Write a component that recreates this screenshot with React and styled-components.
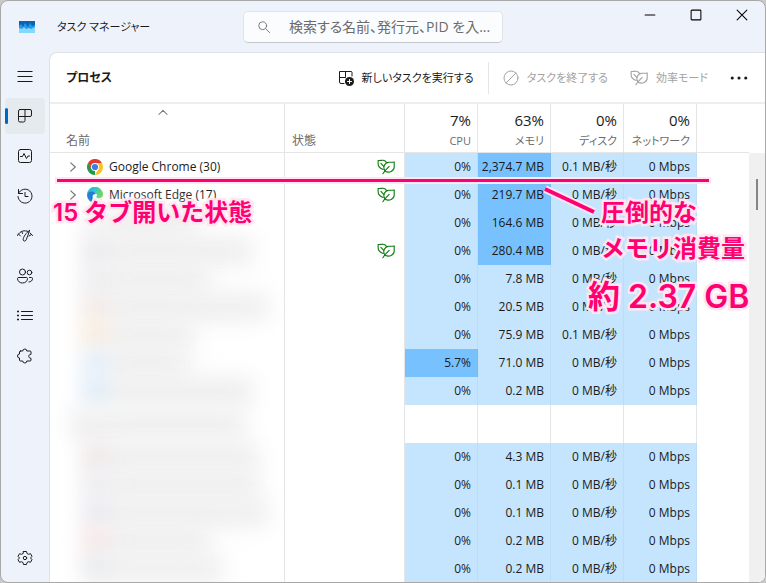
import React from 'react'
import styled, { createGlobalStyle } from 'styled-components'

const colors = {
  chrome: '#eef3fb',
  line: '#e5e5e5',
  text: '#1b1b1b',
  muted: '#6b6b6b',
  disabled: '#a3a3a3',
  accent: '#0067c0',
  heat: '#c5e5ff',
  heatStrong: '#77c1ff',
  leaf: '#107c10',
  marker: '#ff0073',
  markerEdge: '#ffe6f1',
}

const GlobalStyle = createGlobalStyle`
  * {
    box-sizing: border-box;
  }
  body {
    margin: 0;
    background: #c9c9c9;
    color: ${colors.text};
    font-family: 'Open Sans', 'Noto Sans CJK JP', sans-serif;
    font-size: 12px;
    line-height: 16px;
    font-feature-settings: 'palt';
  }
  button,
  input {
    font: inherit;
    font-feature-settings: inherit;
    color: inherit;
  }
`

const Window = styled.div`
  position: relative;
  display: flex;
  flex-direction: column;
  height: 100vh;
  overflow: hidden;
  border: 1px solid #a8a8a8;
  border-radius: 8px;
  background: ${colors.chrome};
`
const TitleBar = styled.header`
  display: grid;
  grid-template-columns: 12fr 260px 13fr;
  flex: none;
  height: 51px;
`
const TitleGroup = styled.div`
  display: flex;
  align-items: center;
  gap: 22px;
  padding-left: 18px;
`
const AppName = styled.h1`
  margin: 0;
  font-size: 11px;
  font-weight: 400;
`
const SearchBox = styled.label`
  display: flex;
  align-items: center;
  align-self: center;
  gap: 18px;
  height: 32px;
  padding: 0 8px 0 13px;
  border: 1px solid #dfe3ea;
  border-bottom-color: #c4c8ce;
  border-radius: 5px;
  background: #fbfcfe;
  color: ${colors.muted};
`
const SearchInput = styled.input`
  flex: 1;
  min-width: 0;
  padding: 0;
  border: 0;
  outline: 0;
  background: none;
  font-size: 14px;
  line-height: 20px;
  &::placeholder {
    color: ${colors.muted};
    opacity: 1;
  }
`
const WindowControls = styled.div`
  display: flex;
  justify-content: flex-end;
  align-items: flex-start;
`
const ControlButton = styled.button`
  display: grid;
  place-items: center;
  width: 46px;
  height: 28px;
  padding: 0;
  border: 0;
  background: none;
`
const Body = styled.div`
  display: flex;
  flex: 1;
  min-height: 0;
`
const Sidebar = styled.nav`
  display: flex;
  flex-direction: column;
  flex: none;
  gap: 4px;
  width: 48px;
  padding: 6px 4px;
`
const NavButton = styled.button`
  display: flex;
  align-items: center;
  gap: 9px;
  width: 40px;
  height: 36px;
  padding: 0;
  border: 0;
  border-radius: 4px;
  background: ${(p) => (p.$active ? '#e5eaee' : 'none')};
  margin-top: ${(p) => (p.$last ? 'auto' : '0')};
  &::before {
    content: '';
    width: 3px;
    height: 16px;
    border-radius: 2px;
    background: ${(p) => (p.$active ? colors.accent : 'transparent')};
  }
`
const Main = styled.main`
  flex: 1;
  min-width: 0;
  overflow: hidden;
  border: 1px solid #dde2ea;
  border-width: 1px 0 0 1px;
  border-top-left-radius: 8px;
  background: #fff;
`
const Toolbar = styled.div`
  display: flex;
  align-items: center;
  height: 51px;
  padding: 0 17px 0 16px;
  border-bottom: 2px solid #eeeeee;
`
const PageTitle = styled.h2`
  flex: 1;
  margin: 0;
  font-size: 12px;
  line-height: 20px;
  font-weight: 700;
`
const ToolButton = styled.button`
  display: flex;
  align-items: center;
  gap: 8px;
  padding: 0;
  border: 0;
  background: none;
  font-size: 11px;
  white-space: nowrap;
  margin-left: ${(p) => (p.$gap ? '22px' : '0')};
  &:disabled {
    color: ${colors.disabled};
  }
`
const Divider = styled.span`
  width: 1px;
  height: 32px;
  margin: 0 14px;
  background: ${colors.line};
`
const TableArea = styled.div`
  display: flex;
`
const Table = styled.table`
  flex: 1;
  width: 100%;
  table-layout: fixed;
  border-collapse: separate;
  border-spacing: 0;
`
const Col = styled.col`
  width: ${(p) => p.$width};
`
const HeadCell = styled.th`
  height: 49px;
  padding: 0 6px 3px 7px;
  border-right: ${(p) => (p.$end ? '0' : `1px solid ${colors.line}`)};
  border-bottom: 1px solid ${colors.line};
  color: ${colors.muted};
  font-size: ${(p) => (p.$number ? '11px' : '12px')};
  font-weight: 400;
  text-align: ${(p) => (p.$number ? 'right' : 'left')};
  vertical-align: bottom;
  white-space: nowrap;
`
const NameHead = styled(HeadCell)`
  padding-left: 16px;
`
const SortMark = styled.span`
  display: block;
  height: 26px;
  padding-right: 18px;
  text-align: center;
`
const Total = styled.strong`
  display: block;
  color: ${colors.text};
  font-size: 15px;
  line-height: 26px;
  font-weight: 400;
`
const Cell = styled.td`
  height: ${(p) => (p.$tall ? '38px' : '28px')};
  padding: 0;
  border-right: 1px solid ${colors.line};
`
const EndCell = styled.td`
  padding: 0;
`
const StatusCell = styled(Cell)`
  padding-right: 9px;
  text-align: right;
  svg {
    display: inline-block;
    vertical-align: middle;
  }
`
const ValueCell = styled(Cell)`
  padding-right: 6px;
  border-right-color: ${(p) => (p.$strong ? '#77b9f0' : '#bddcf5')};
  background: ${(p) => (p.$strong ? colors.heatStrong : colors.heat)};
  text-align: right;
  white-space: nowrap;
`
const ProcessName = styled.div`
  display: flex;
  align-items: center;
  gap: 6px;
  padding-left: 17px;
`
const ExpandButton = styled.button`
  display: grid;
  place-items: center;
  width: 12px;
  height: 16px;
  margin-right: 2px;
  padding: 0;
  border: 0;
  background: none;
`
const HiddenName = styled.div`
  display: flex;
  align-items: center;
  gap: 2px;
  padding-left: ${(p) => (p.$group ? '20px' : '34px')};
  filter: blur(11px);
`
const HiddenIcon = styled.span`
  width: 22px;
  height: 28px;
  background: ${(p) => p.$tint};
`
const HiddenText = styled.span`
  width: ${(p) => p.$width}px;
  height: 28px;
  background: #eeeeee;
`
const ScrollTrack = styled.div`
  flex: none;
  width: 16px;
  margin-top: 49px;
  padding: 26px 7px 0;
  background: #f0f0f0;
`
const ScrollThumb = styled.div`
  width: 2px;
  height: 31px;
  background: #858585;
`

const MarkerLine = styled.div`
  position: absolute;
  top: 178px;
  left: 56px;
  width: 652px;
  height: 3px;
  background: ${colors.marker};
  box-shadow: 0 0 0 2px ${colors.markerEdge};
`
const MarkerPointer = styled.svg`
  position: absolute;
  top: 182px;
  left: 538px;
`
const MarkerText = styled.p`
  position: absolute;
  top: ${(p) => p.$top}px;
  left: ${(p) => p.$left}px;
  margin: 0;
  color: ${colors.marker};
  font-family: Inter, 'Noto Sans CJK JP', sans-serif;
  font-feature-settings: normal;
  font-size: ${(p) => (p.$big ? '32px' : '24px')};
  line-height: 36px;
  font-weight: 600;
  white-space: nowrap;
  -webkit-text-stroke: 5px ${colors.markerEdge};
  paint-order: stroke fill;
`

const Icon = ({ size = 16, color = 'currentColor', children }) => (
  <svg
    width={size}
    height={size}
    viewBox="0 0 16 16"
    fill="none"
    stroke={color}
    strokeLinecap="round"
    strokeLinejoin="round"
    aria-hidden="true"
  >
    {children}
  </svg>
)

const AppLogo = () => (
  <svg width="16" height="12" viewBox="0 0 16 12" aria-hidden="true">
    <path d="M0 0h16v12H0z" fill="#0a63b5" />
    <path d="M0 5l2-2 2 3 2-4 3 4 2-4 2 3 3-1v8H0z" fill="#2499e8" />
    <path d="M0 7l3 1 2-2 2 2 3-1 2 1 4-2v6H0z" fill="#84d8ff" />
  </svg>
)

const LeafIcon = ({ color }) => (
  <Icon size={18} color={color}>
    <path d="M5.500 10.200C2.800 9.200 1 7.500 1 5V2.200c2 .3 3-.4 4.500-.2 1.400.2 2.500 1 3 2" />
    <path d="M7 11.500C4.800 8.500 6.500 4.200 10.500 3.800c1.700-.2 3 .2 4.800-.3V8c0 3.500-4.500 6-8.300 3.500z" />
    <path d="M3.500 4.800l2.500 2.700M5.200 14l1.800-2.500L10.800 7.500" />
  </Icon>
)

const ChromeIcon = () => (
  <svg width="16" height="16" viewBox="0 0 16 16" aria-hidden="true">
    <path d="M8 8L8 16A8 8 0 0 1 1.070 4L4.540 10z" fill="#229a49" />
    <path d="M8 4h6.930A8 8 0 0 1 8 16l3.460-6z" fill="#fcc31e" />
    <path d="M8 4H1.070L4.540 10z" fill="#229a49" />
    <path d="M1.070 4A8 8 0 0 1 14.930 4H8a4 4 0 0 0-3.460 6z" fill="#e33b2e" />
    <circle cx="8" cy="8" r="4" fill="#fff" />
    <circle cx="8" cy="8" r="3.100" fill="#3b7ded" />
  </svg>
)

const EdgeIcon = () => (
  <svg width="16" height="16" viewBox="0 0 16 16" aria-hidden="true">
    <defs>
      <linearGradient id="edge-wave" x1="0" y1="0" x2="1" y2="0.4">
        <stop offset="0" stopColor="#2ba8e0" />
        <stop offset="0.5" stopColor="#2fc3d4" />
        <stop offset="1" stopColor="#62d84e" />
      </linearGradient>
    </defs>
    <path d="M0 8a8 8 0 0 1 16-.5c.1 2.500-2 3.800-4 3.800-2.300 0-3.200-1-2.500-1.800C11 7 8 4.500 5 5 2.500 5.400.5 6.500 0 8z" fill="url(#edge-wave)" />
    <path d="M0 8c.5-2.500 2.500-3.500 5-3.500 2 0 3.500 1 4 2.500-3-.5-4 2-3 4s3.500 3.500 8.500 1.500C13 15 10.500 16 8 16a8 8 0 0 1-8-8z" fill="#1479d3" />
    <path d="M5.500 7C4 8.500 4 11.500 6 13.500c1.500 1.500 5 1.500 8.500-1C13 15 10.500 16 8 16c-4-.5-6-5.500-2.500-9z" fill="#0d4f9e" />
  </svg>
)

const NavIcons = {
  menu: <path d="M.5 3.500h15M.5 8.500h15M.5 13.500h15" strokeLinecap="butt" />,
  processes: <path d="M3 1.500h10a1.500 1.500 0 0 1 1.500 1.500v4A1.500 1.500 0 0 1 13 8.500H1.500V3A1.500 1.500 0 0 1 3 1.500zM1.500 8.500v4A1.500 1.500 0 0 0 3 14h3.500A1.500 1.500 0 0 0 8 12.500v-11" />,
  performance: (
    <>
      <rect x="1.500" y="1.500" width="13" height="13" rx="2" />
      <path d="M3.500 8.500h2l1.500-3 2.500 5 1.500-2.500h1.500" />
    </>
  ),
  history: <path d="M1.500 1.500v4h4M1.500 5.500A7 7 0 1 1 1 8.500M8 4.500v4h3" />,
  startup: (
    <>
      <path d="M.5 7.500C3 2.500 8 2 11 3.500M13 5c1 .8 2 1.500 2.500 2.500M1.500 6l2 2M5 4l.5 1.500M12 8l2.500-1.500" />
      <path d="M12.500 2.500C9.500 4.500 6 9 6.200 11.800c.3 1.700 2.300 1.700 3 0C10 9.500 11.500 6 12.500 2.500z" />
    </>
  ),
  users: (
    <>
      <circle cx="5.500" cy="4" r="3" />
      <circle cx="12.500" cy="4.500" r="2.300" />
      <path d="M2 9.500h7.500c.6 0 1 .4 1 1 0 2.500-2 4.500-5 4.500S.5 13 .5 10.500c0-.6.4-1 1.500-1zM12.500 9.500h2c.6 0 1 .4 1 1 0 2-1.500 3.500-3.500 3.500" />
    </>
  ),
  details: (
    <>
      <path d="M4.500 3.500h11M4.500 7.500h11M4.500 11.500h11" />
      <path d="M0 3.500h2M0 7.500h2M0 11.500h2" strokeWidth="1.500" strokeLinecap="butt" />
    </>
  ),
  services: <path d="M3.500 3h2.300a2 2 0 0 1 4 0H13a1 1 0 0 1 1 1v2.300c-3 0-3 4 0 4V12a1 1 0 0 1-1 1H9.800a2 2 0 0 1-4 0H3.500a1 1 0 0 1-1-1v-2a2 2 0 0 1 0-4V4a1 1 0 0 1 1-1z" />,
  settings: (
    <>
      <path d="M6.500 1.500h3l.5 2 1.500.8 2-.6 1.500 2.600L13.500 8l1.500 1.700-1.500 2.600-2-.6-1.500.8-.5 2h-3l-.5-2-1.500-.8-2 .6L1 9.700 2.500 8 1 6.300l1.500-2.600 2 .6L6 3.500z" />
      <circle cx="8" cy="8" r="1.700" />
    </>
  ),
}

const navItems = [
  { id: 'menu', label: 'メニュー' },
  { id: 'processes', label: 'プロセス', active: true },
  { id: 'performance', label: 'パフォーマンス' },
  { id: 'history', label: 'アプリの履歴' },
  { id: 'startup', label: 'スタートアップ アプリ' },
  { id: 'users', label: 'ユーザー' },
  { id: 'details', label: '詳細' },
  { id: 'services', label: 'サービス' },
  { id: 'settings', label: '設定', last: true },
]

const totals = [
  { label: 'CPU', value: '7%' },
  { label: 'メモリ', value: '63%' },
  { label: 'ディスク', value: '0%' },
  { label: 'ネットワーク', value: '0%' },
]

const rows = [
  { name: 'Google Chrome (30)', icon: <ChromeIcon />, leaf: true, memory: '2,374.7 MB', disk: '0.1 MB/秒', hot: 'memory' },
  { name: 'Microsoft Edge (17)', icon: <EdgeIcon />, leaf: true, memory: '219.7 MB', hot: 'memory' },
  { tint: '#f3f3f5', width: 90, memory: '164.6 MB', hot: 'memory' },
  { tint: '#e6e6ea', width: 145, leaf: true, memory: '280.4 MB', hot: 'memory' },
  { tint: '#e9e9ed', width: 100, memory: '7.8 MB' },
  { tint: '#efe5e2', width: 160, memory: '20.5 MB' },
  { tint: '#f8e8d4', width: 85, memory: '75.9 MB', disk: '0.1 MB/秒' },
  { tint: '#deebfa', width: 80, cpu: '5.7%', memory: '71.0 MB', hot: 'cpu' },
  { tint: '#d8e8f6', width: 145, memory: '0.2 MB' },
  { group: true, width: 175 },
  { tint: '#eae2e1', width: 150, memory: '4.3 MB' },
  { tint: '#e9e9ee', width: 150, memory: '0.1 MB' },
  { tint: '#e5e6ec', width: 160, memory: '0.1 MB' },
  { tint: '#f6e2e1', width: 100, memory: '0.2 MB' },
  { tint: '#e3e6ea', width: 115, memory: '0.2 MB' },
]

const NameContent = ({ row }) =>
  row.name ? (
    <ProcessName>
      <ExpandButton aria-label={`${row.name} を展開`}>
        <Icon size={12} color="#777">
          <path d="M5 2.500L11 8l-6 5.500" strokeWidth="1.600" />
        </Icon>
      </ExpandButton>
      {row.icon}
      {row.name}
    </ProcessName>
  ) : (
    <HiddenName $group={row.group}>
      {row.tint && <HiddenIcon $tint={row.tint} />}
      <HiddenText $width={row.width} />
    </HiddenName>
  )

const ProcessRow = ({ row }) => (
  <tr>
    <Cell $tall={row.group}>
      <NameContent row={row} />
    </Cell>
    <StatusCell>{row.leaf && <LeafIcon color={colors.leaf} />}</StatusCell>
    {row.group ? (
      totals.map((item) => <Cell key={item.label} />)
    ) : (
      <>
        <ValueCell $strong={row.hot === 'cpu'}>{row.cpu || '0%'}</ValueCell>
        <ValueCell $strong={row.hot === 'memory'}>{row.memory}</ValueCell>
        <ValueCell>{row.disk || '0 MB/秒'}</ValueCell>
        <ValueCell>0 Mbps</ValueCell>
      </>
    )}
    <EndCell />
  </tr>
)

const ProcessTable = () => (
  <TableArea>
    <Table>
      <colgroup>
        <Col $width="235px" />
        <Col $width="120px" />
        {totals.map((item) => (
          <Col key={item.label} $width="73px" />
        ))}
        <Col $width="auto" />
      </colgroup>
      <thead>
        <tr>
          <NameHead>
            <SortMark>
              <Icon size={12} color="#777">
                <path d="M2.500 10L8 4.500l5.500 5.500" strokeWidth="1.400" />
              </Icon>
            </SortMark>
            名前
          </NameHead>
          <HeadCell>状態</HeadCell>
          {totals.map((item) => (
            <HeadCell key={item.label} $number>
              <Total>{item.value}</Total>
              {item.label}
            </HeadCell>
          ))}
          <HeadCell as="td" $end />
        </tr>
      </thead>
      <tbody>
        {rows.map((row, i) => (
          <ProcessRow key={i} row={row} />
        ))}
      </tbody>
    </Table>
    <ScrollTrack>
      <ScrollThumb />
    </ScrollTrack>
  </TableArea>
)

const Annotations = () => (
  <>
    <MarkerLine />
    <MarkerPointer width="62" height="36" viewBox="0 0 62 36" aria-hidden="true">
      <path d="M6 6l49 23" stroke={colors.markerEdge} strokeWidth="8" />
      <path d="M6 6l49 23" stroke={colors.marker} strokeWidth="4" />
    </MarkerPointer>
    <MarkerText $top={194} $left={52}>15 タブ開いた状態</MarkerText>
    <MarkerText $top={194} $left={600}>圧倒的な</MarkerText>
    <MarkerText $top={230} $left={600}>メモリ消費量</MarkerText>
    <MarkerText $top={278} $left={587} $big>約 2.37 GB</MarkerText>
  </>
)

const App = () => (
  <>
    <GlobalStyle />
    <Window>
      <TitleBar>
        <TitleGroup>
          <AppLogo />
          <AppName>タスク マネージャー</AppName>
        </TitleGroup>
        <SearchBox>
          <Icon size={14}>
            <circle cx="6.500" cy="6.500" r="4.500" />
            <path d="M10 10l4.500 4.500" />
          </Icon>
          <SearchInput type="text" aria-label="検索" placeholder="検索する名前、発行元、PID を入..." />
        </SearchBox>
        <WindowControls>
          <ControlButton aria-label="最小化">
            <Icon size={12} color="#000">
              <path d="M1.500 8h13" strokeWidth="1.400" />
            </Icon>
          </ControlButton>
          <ControlButton aria-label="最大化">
            <Icon size={12} color="#000">
              <rect x="1.500" y="1.500" width="13" height="13" rx="1" strokeWidth="1.400" />
            </Icon>
          </ControlButton>
          <ControlButton aria-label="閉じる">
            <Icon size={12} color="#000">
              <path d="M1.500 1.500l13 13M14.500 1.500l-13 13" strokeWidth="1.400" />
            </Icon>
          </ControlButton>
        </WindowControls>
      </TitleBar>
      <Body>
        <Sidebar>
          {navItems.map((item) => (
            <NavButton key={item.id} aria-label={item.label} $active={item.active} $last={item.last}>
              <Icon>{NavIcons[item.id]}</Icon>
            </NavButton>
          ))}
        </Sidebar>
        <Main>
          <Toolbar>
            <PageTitle>プロセス</PageTitle>
            <ToolButton>
              <Icon>
                <path d="M6 13.500H3A1.500 1.500 0 0 1 1.500 12V1.500H13a1 1 0 0 1 1 1V6M1.500 7.500h6M7.500 1.500v5" />
                <circle cx="11.500" cy="11.500" r="4.500" fill="currentColor" stroke="none" />
                <path d="M9.500 11.500h4M11.500 9.500v4" stroke="#fff" />
              </Icon>
              新しいタスクを実行する
            </ToolButton>
            <Divider />
            <ToolButton disabled>
              <Icon>
                <circle cx="8" cy="8" r="7" />
                <path d="M3 13L13 3" />
              </Icon>
              タスクを終了する
            </ToolButton>
            <ToolButton disabled $gap>
              <LeafIcon />
              効率モード
            </ToolButton>
            <ToolButton $gap aria-label="その他">
              <Icon size={18}>
                <g fill="currentColor" stroke="none">
                  <circle cx="2" cy="8" r="1.400" />
                  <circle cx="8" cy="8" r="1.400" />
                  <circle cx="14" cy="8" r="1.400" />
                </g>
              </Icon>
            </ToolButton>
          </Toolbar>
          <ProcessTable />
        </Main>
      </Body>
      <Annotations />
    </Window>
  </>
)

export default App
